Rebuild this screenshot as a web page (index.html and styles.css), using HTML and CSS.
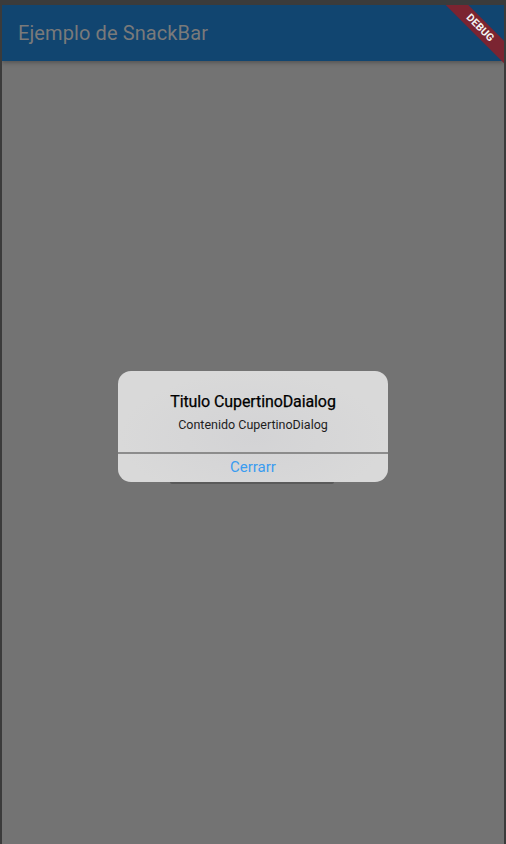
FILE: index.html
```html
<!DOCTYPE html>
<html lang="es">
<head>
<meta charset="utf-8">
<link rel="stylesheet" href="styles.css">
</head>
<body>
<div class="screen">
  <header class="appbar">
    <h1 class="appbar-title">Ejemplo de SnackBar</h1>
  </header>
  <main class="content"></main>
  <div class="debug-banner"><span>DEBUG</span></div>
  <div class="barrier">
    <div class="snack-shadow"></div>
    <div class="dialog">
      <div class="dialog-body">
        <div class="dialog-title">Titulo CupertinoDaialog</div>
        <div class="dialog-text">Contenido CupertinoDialog</div>
      </div>
      <div class="dialog-divider"></div>
      <button class="dialog-action">Cerrarr</button>
    </div>
  </div>
</div>
</body>
</html>
```
FILE: styles.css
```css
html, body {
  margin: 0;
  padding: 0;
  width: 506px;
  height: 844px;
  overflow: hidden;
  background: #3b3b3b;
  font-family: Roboto, "Noto Sans", sans-serif;
}
body {
  padding: 5px 2px 0 2px;
  box-sizing: border-box;
}
.screen {
  position: relative;
  width: 502px;
  height: 839px;
  display: flex;
  flex-direction: column;
  background: #737373;
  overflow: hidden;
}
.appbar {
  height: 56px;
  flex: none;
  background: #114570;
  display: flex;
  align-items: center;
  padding-left: 16px;
  box-shadow: 0 2px 4px rgba(0,0,0,0.25);
  position: relative;
  z-index: 1;
}
.appbar-title {
  margin: 0;
  font-size: 20px;
  font-weight: 400;
  color: #7a7a7a;
  letter-spacing: 0.1px;
}
.content {
  flex: 1;
  background: #737373;
}
.debug-banner {
  position: absolute;
  top: 0;
  right: 0;
  width: 60px;
  height: 60px;
  overflow: hidden;
  z-index: 2;
}
.debug-banner span {
  position: absolute;
  top: 15px;
  left: -14px;
  width: 100px;
  height: 16px;
  line-height: 16px;
  background: #7b2431;
  color: #f4f4f4;
  font-size: 10.5px;
  font-weight: 700;
  text-align: center;
  transform: rotate(45deg);
  letter-spacing: 0.1px;
}
.barrier {
  position: absolute;
  inset: 0;
  display: flex;
  align-items: center;
  justify-content: center;
  padding-top: 3px;
  z-index: 3;
}
.snack-shadow {
  position: absolute;
  left: 168px;
  top: 474px;
  width: 164px;
  height: 5px;
  border-radius: 2px;
  background: #5a5a5a;
}
.dialog {
  position: relative;
  width: 270px;
  border-radius: 13px;
  background: radial-gradient(ellipse at 50% 60%, #d3d3d5 0%, #d9d9d9 70%);
  display: flex;
  flex-direction: column;
  overflow: hidden;
}
.dialog-body {
  display: flex;
  flex-direction: column;
  align-items: center;
  padding: 20px 16px 19px;
  gap: 3px;
}
.dialog-title {
  font-size: 16px;
  font-weight: 400;
  color: #000;
  line-height: 22px;
  letter-spacing: -0.1px;
  -webkit-text-stroke: 0.25px #000;
}
.dialog-text {
  font-size: 12.5px;
  color: #1e1e1e;
  line-height: 17px;
}
.dialog-divider {
  height: 2px;
  background: #8c8c8c;
}
.dialog-action {
  border: 0;
  background: transparent;
  font-family: inherit;
  font-size: 15px;
  color: #3a9cf0;
  height: 28px;
  padding: 0;
  padding-bottom: 2px;
}
```
